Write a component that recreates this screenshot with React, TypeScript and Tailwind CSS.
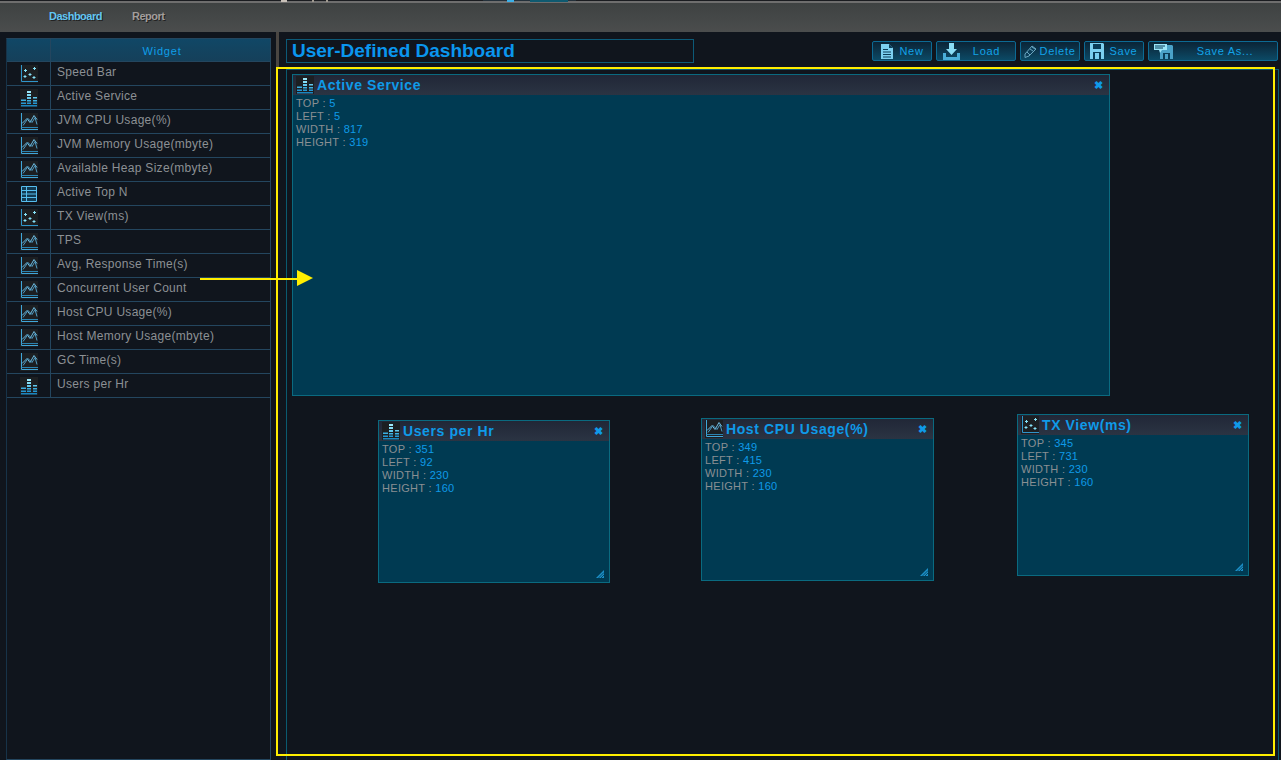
import type { ReactNode } from 'react';

type IconKind = 'scatter' | 'bars' | 'line' | 'table';

function ScatterIcon({ size = 18 }: { size?: number }) {
  return (
    <svg width={size} height={size} viewBox="0 0 18 18">
      <rect width="18" height="18" fill="#1c1f22" />
      <path d="M1.500 0v16.500H18" fill="none" stroke="#2f95cc" strokeWidth="1" />
      <path
        d="M4 5.500h3M5.500 4v3M13 3.500h3M14.500 2v3M3.500 11.500h3M5 10v3M8.500 9.500h3M10 8v3M12.500 12.500h3M14 11v3"
        stroke="#86e2f8"
        strokeWidth="1"
      />
    </svg>
  );
}

function BarsIcon({ size = 18 }: { size?: number }) {
  return (
    <svg width={size} height={size} viewBox="0 0 18 18">
      <rect width="18" height="18" fill="#1c1f22" />
      <path d="M7 2h4v2H7z" fill="#9ce8fa" />
      <path d="M7 5h4v2H7z" fill="#84def6" />
      <path d="M7 8h4v2H7zM13 8h4v1.500h-4z" fill="#62c8ee" />
      <path d="M1 10.500h5V12H1zM7 11h4v1.500H7zM13 11h4v1.500h-4z" fill="#3cb0e2" />
      <path d="M1 13.500h5V15H1zM7 13.500h4V15H7zM13 13.500h4V15h-4z" fill="#2598d4" />
      <path d="M1 16h16v1.500H1z" fill="#1a86c0" />
    </svg>
  );
}

function LineIcon({ size = 18 }: { size?: number }) {
  return (
    <svg width={size} height={size} viewBox="0 0 18 18">
      <rect width="18" height="18" fill="#1c1f22" />
      <path d="M1.500 0v16.500H18" fill="none" stroke="#3fa6da" strokeWidth="1" />
      <path d="M1.500 14.500H18" stroke="#2c83b0" strokeWidth="1" />
      <path d="M2 10.500l5-5 3 4 4-7 3 4" fill="none" stroke="#6fbce0" strokeWidth="1" />
      <path d="M3 12.500l5-7 4 4 3-5 2 7" fill="none" stroke="#4f9cc4" strokeWidth="1" />
    </svg>
  );
}

function TableIcon({ size = 18 }: { size?: number }) {
  return (
    <svg width={size} height={size} viewBox="0 0 18 18">
      <path d="M1.500 1.500h15v15h-15z" fill="#123a52" stroke="#56bdee" strokeWidth="1" />
      <path d="M1.500 5.500h15M1.500 9h15M1.500 12.500h15M6.500 1.500v15" stroke="#56bdee" strokeWidth="1" />
    </svg>
  );
}

function WidgetIcon({ kind, size }: { kind: IconKind; size?: number }) {
  if (kind === 'scatter') return <ScatterIcon size={size} />;
  if (kind === 'bars') return <BarsIcon size={size} />;
  if (kind === 'table') return <TableIcon size={size} />;
  return <LineIcon size={size} />;
}

const widgets: { name: string; icon: IconKind }[] = [
  { name: 'Speed Bar', icon: 'scatter' },
  { name: 'Active Service', icon: 'bars' },
  { name: 'JVM CPU Usage(%)', icon: 'line' },
  { name: 'JVM Memory Usage(mbyte)', icon: 'line' },
  { name: 'Available Heap Size(mbyte)', icon: 'line' },
  { name: 'Active Top N', icon: 'table' },
  { name: 'TX View(ms)', icon: 'scatter' },
  { name: 'TPS', icon: 'line' },
  { name: 'Avg, Response Time(s)', icon: 'line' },
  { name: 'Concurrent User Count', icon: 'line' },
  { name: 'Host CPU Usage(%)', icon: 'line' },
  { name: 'Host Memory Usage(mbyte)', icon: 'line' },
  { name: 'GC Time(s)', icon: 'line' },
  { name: 'Users per Hr', icon: 'bars' },
];

function Sidebar() {
  return (
    <aside className="ml-[6px] mt-[6px] h-[722px] w-[265px] shrink-0 border border-b-[#24465f] border-l-[#173349] border-r-[#24465f] border-t-[#24465f]">
      <div className="flex h-[23px] border-b border-[#24465f] bg-gradient-to-b from-[#104766] to-[#15405a]">
        <div className="w-[44px] border-r border-[#24465f]" />
        <div className="flex-1 pl-[6px] pr-[3px] text-center text-[11px] leading-[25px] tracking-[0.8px] text-[#0f9ee8]">
          Widget
        </div>
      </div>
      {widgets.map((w) => (
        <div key={w.name} className="flex h-[24px] border-b border-[#24465f] pr-[1px]">
          <div className="flex w-[44px] items-center justify-center border-r border-[#24465f]">
            <WidgetIcon kind={w.icon} />
          </div>
          <div className="pl-[6px] text-[12px] leading-[21px] tracking-[0.3px] text-[#8c9094]">{w.name}</div>
        </div>
      ))}
    </aside>
  );
}

function NewIcon() {
  return (
    <svg width="14" height="15" viewBox="0 0 14 15">
      <path d="M1 0h8l4 4v11H1z" fill="#7cd0f0" />
      <path d="M9 0v4h4z" fill="#0b3d58" />
      <path d="M3 5.500h5M3 8h8M3 10.500h8M3 13h8" stroke="#0b3d58" strokeWidth="1" />
    </svg>
  );
}

function LoadIcon() {
  return (
    <svg width="17" height="17" viewBox="0 0 17 17">
      <path d="M0 10h3v4h11v-4h3v7H0z" fill="#4aaed8" />
      <path d="M6 0h5v6h3l-5.500 6L3 6h3z" fill="#8adcf4" />
    </svg>
  );
}

function DeleteIcon() {
  return (
    <svg width="13" height="14" viewBox="0 0 13 14">
      <path d="M1 10l7-8 4 3-7 7-4 1.500z" fill="#0b3d58" stroke="#6aa6c0" strokeWidth="1" />
      <path d="M3 8l3 3M6 5l3 2M8 3l3 2" stroke="#6aa6c0" strokeWidth="1" />
    </svg>
  );
}

function SaveIcon() {
  return (
    <svg width="14" height="16" viewBox="0 0 14 16">
      <path d="M0 0h13l1 1v15H0z" fill="#7cd0f0" />
      <path d="M3 1h8v5H3z" fill="#0b3d58" />
      <path d="M3 9h8v7H3z" fill="#0b3d58" />
      <path d="M5 10h4v6H5z" fill="#7cd0f0" />
    </svg>
  );
}

function SaveAsIcon() {
  return (
    <svg width="19" height="15" viewBox="0 0 19 15">
      <path d="M6 1h12l1 1v13H6z" fill="#4aa2c8" />
      <path d="M9 9h7v6H9z" fill="#0b3d58" />
      <path d="M11 10h3v5h-3z" fill="#4aa2c8" />
      <path d="M0 0h13v6H8l-2 3-1-3H0z" fill="#9ae4f8" />
      <path d="M1 2h10M1 4h8" stroke="#0b3d58" strokeWidth="1" />
    </svg>
  );
}

function ToolButton({ icon, label, className }: { icon: ReactNode; label: string; className: string }) {
  return (
    <button
      className={`flex h-[20px] items-center rounded-[2px] border border-[#0c6a94] bg-gradient-to-b from-[#0a2436] to-[#0b4a66] text-[11px] tracking-[0.7px] text-[#12a3e8] ${className}`}
    >
      {icon}
      <span className="flex-1 text-center">{label}</span>
    </button>
  );
}

function CanvasWidget({
  title,
  icon,
  top,
  left,
  width,
  height,
  className,
  resizable = true,
}: {
  title: string;
  icon: IconKind;
  top: number;
  left: number;
  width: number;
  height: number;
  className: string;
  resizable?: boolean;
}) {
  const rows: [string, number][] = [
    ['TOP', top],
    ['LEFT', left],
    ['WIDTH', width],
    ['HEIGHT', height],
  ];
  return (
    <div className={`absolute border border-[#0a6a80] bg-[#003a52] ${className}`}>
      <div className="flex h-[20px] items-center bg-gradient-to-b from-[#212737] to-[#2b3443] pl-[3px] pr-[6px]">
        <WidgetIcon kind={icon} />
        <span className="ml-[3px] text-[14px] font-bold leading-[20px] tracking-[0.6px] text-[#0f9ae8]">{title}</span>
        <span className="ml-auto text-[11px] font-bold leading-none text-[#0f9ae8]">✖</span>
      </div>
      <div className="pl-[3px] pt-[2px] text-[11px] leading-[13px] tracking-[0.3px]">
        {rows.map(([label, value]) => (
          <div key={label} className="text-[#8a8f92]">
            {label} : <span className="text-[#0f9ae8]">{value}</span>
          </div>
        ))}
      </div>
      {resizable && (
        <svg className="absolute bottom-[4px] right-[5px]" width="8" height="8" viewBox="0 0 8 8">
          <path d="M0 8l8-8v8z" fill="#1c8fc8" />
          <path d="M2.500 8l5.500-5.500M5 8l3-3" stroke="#003a52" strokeWidth="0.8" />
        </svg>
      )}
    </div>
  );
}

export default function App() {
  return (
    <div className="relative h-[760px] w-[1281px] overflow-hidden bg-[#10151d] font-['Liberation_Sans',sans-serif]">
      <header className="h-[32px] border-t border-[#1a1c20] bg-[#10151d]">
        <div className="flex h-[31px] border-t-[2px] border-[#6e6e6e] bg-gradient-to-b from-[#3e4242] to-[#4b4d4d] pl-[49px] text-[11px] font-bold leading-[26px] tracking-[-0.5px] [text-shadow:1px_1px_0_#222]">
          <span className="text-[#62c6f2]">Dashboard</span>
          <span className="ml-[30px] text-[#a29e9c]">Report</span>
        </div>
      </header>
      <div className="flex">
        <Sidebar />
        <div className="ml-[5px] h-[35px] w-[3px] shrink-0 bg-[#4a4642]" />
        <main className="flex-1 pl-[7px]">
          <div className="flex items-start pt-[7px]">
            <h1 className="h-[24px] w-[408px] border border-[#0c5a78] pl-[5px] text-[19px] font-bold leading-[22px] text-[#0a96ee]">
              User-Defined Dashboard
            </h1>
            <div className="ml-[178px] flex gap-[4px] pt-[2px]">
              <ToolButton icon={<span className="ml-[7px]"><NewIcon /></span>} label="New" className="w-[60px] pr-[2px]" />
              <ToolButton icon={<span className="ml-[6px]"><LoadIcon /></span>} label="Load" className="w-[80px] pr-[2px]" />
              <ToolButton icon={<span className="ml-[3px]"><DeleteIcon /></span>} label="Delete" className="w-[60px] pr-[1px]" />
              <ToolButton icon={<span className="ml-[5px]"><SaveIcon /></span>} label="Save" className="w-[60px]" />
              <ToolButton icon={<span className="ml-[5px]"><SaveAsIcon /></span>} label="Save As..." className="w-[130px]" />
            </div>
          </div>
          <section className="relative mt-[6px] h-[691px] w-[993px] border-l border-r border-t border-[#0a5a70]">
            <CanvasWidget
              title="Active Service"
              icon="bars"
              top={5}
              left={5}
              width={817}
              height={319}
              resizable={false}
              className="left-[5px] top-[4px] h-[322px] w-[818px]"
            />
            <CanvasWidget title="Users per Hr" icon="bars" top={351} left={92} width={230} height={160} className="left-[91px] top-[350px] h-[163px] w-[232px]" />
            <CanvasWidget title="Host CPU Usage(%)" icon="line" top={349} left={415} width={230} height={160} className="left-[414px] top-[348px] h-[163px] w-[233px]" />
            <CanvasWidget title="TX View(ms)" icon="scatter" top={345} left={731} width={230} height={160} className="left-[730px] top-[344px] h-[162px] w-[232px]" />
          </section>
        </main>
      </div>

      {/* bits of the page behind the top edge */}
      <div className="absolute left-[281px] top-0 h-[2px] w-[6px] bg-[#c8c0b8]" />
      <div className="absolute left-[312px] top-0 h-[2px] w-[2px] bg-[#a09a90]" />
      <div className="absolute left-[326px] top-0 h-[2px] w-[2px] bg-[#a09a90]" />
      <div className="absolute left-[483px] top-0 h-[1px] w-[93px] bg-[#23303a]" />
      <div className="absolute left-[507px] top-0 h-[2px] w-[7px] bg-[#3cb0e8]" />
      <div className="absolute left-[530px] top-0 h-[2px] w-[38px] bg-[#0f5a70]" />

      {/* yellow annotation over the page */}
      <div className="absolute left-[276px] top-[67px] h-[689px] w-[999px] border-2 border-[#ffee00]" />
      <div className="absolute left-[200px] top-[278px] h-[2px] w-[98px] bg-[#ffee00]" />
      <svg className="absolute left-[297px] top-[270px]" width="16" height="16" viewBox="0 0 16 16">
        <path d="M0 0l16 8-16 8z" fill="#ffee00" />
      </svg>
    </div>
  );
}
